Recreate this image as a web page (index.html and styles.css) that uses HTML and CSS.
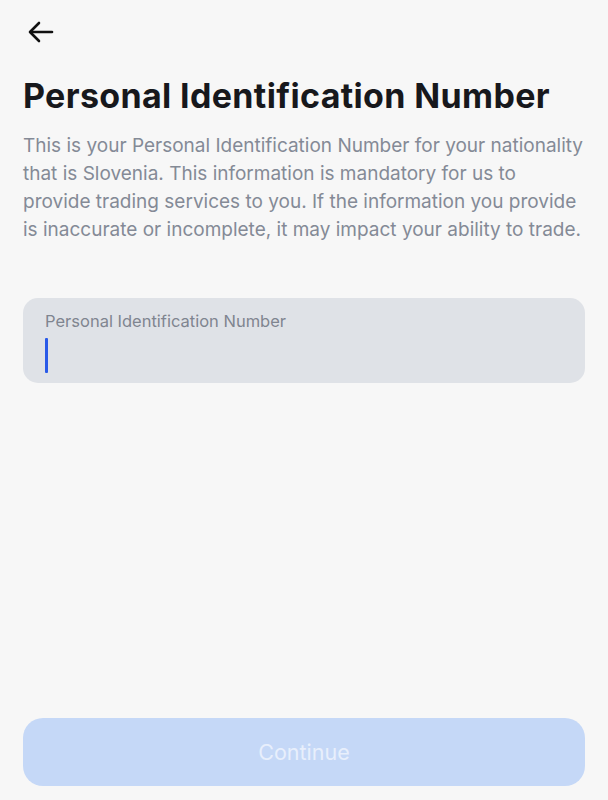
FILE: index.html
```html
<!DOCTYPE html>
<html lang="en">
<head>
    <meta charset="UTF-8">
    <meta name="viewport" content="width=device-width, initial-scale=1.0">
    <title>Personal Identification Number</title>
    <link rel="stylesheet" href="styles.css">
</head>
<body>
    <div class="screen">
        <div class="top-bar">
            <button class="back-btn" aria-label="Back">
                <svg width="28" height="24" viewBox="0 0 28 24" fill="none" stroke="#111" stroke-width="2.6" stroke-linecap="round" stroke-linejoin="round">
                    <path d="M25 12H4"/>
                    <path d="M12 3L3 12l9 9"/>
                </svg>
            </button>
        </div>
        <h1>Personal Identification Number</h1>
        <p class="intro">This is your Personal Identification Number for your nationality that is Slovenia. This information is mandatory for us to provide trading services to you. If the information you provide is inaccurate or incomplete, it may impact your ability to trade.</p>
        <div class="field">
            <label class="field-label">Personal Identification Number</label>
            <div class="field-input"><span class="caret"></span></div>
        </div>
        <div class="spacer"></div>
        <button class="continue-btn" disabled>Continue</button>
    </div>
</body>
</html>
```

FILE: styles.css
```css
body {
    margin: 0;
    background: #f7f7f7;
    font-family: Inter, "Noto Sans", sans-serif;
}
.screen {
    height: 800px;
    box-sizing: border-box;
    padding: 0 23px 14px 23px;
    display: flex;
    flex-direction: column;
}
.top-bar {
    height: 64px;
    display: flex;
    align-items: center;
}
.back-btn {
    background: none;
    border: none;
    padding: 0;
    margin-left: 4px;
    display: flex;
}
h1 {
    margin: 12px 0 0 0;
    font-size: 34px;
    font-weight: 700;
    color: #17181c;
    letter-spacing: 0.35px;
    line-height: 40px;
}
.intro {
    margin: 16px 0 0 0;
    font-size: 19px;
    line-height: 28px;
    color: #848a96;
}
.field {
    margin-top: 54px;
    background: #dfe2e7;
    border-radius: 15px;
    height: 85px;
    box-sizing: border-box;
    padding: 13px 22px 0 22px;
}
.field-label {
    display: block;
    font-size: 16.5px;
    line-height: 20px;
    color: #7f8590;
}
.field-input {
    margin-top: 7px;
    height: 36px;
}
.caret {
    display: block;
    width: 3px;
    height: 35px;
    background: #2a5ae8;
    border-radius: 1px;
}
.spacer {
    flex: 1;
}
.continue-btn {
    height: 68px;
    border: none;
    border-radius: 20px;
    background: #c5d8f7;
    color: #e8effc;
    font-family: Inter, "Noto Sans", sans-serif;
    font-size: 21.5px;
    font-weight: 400;
}
```
